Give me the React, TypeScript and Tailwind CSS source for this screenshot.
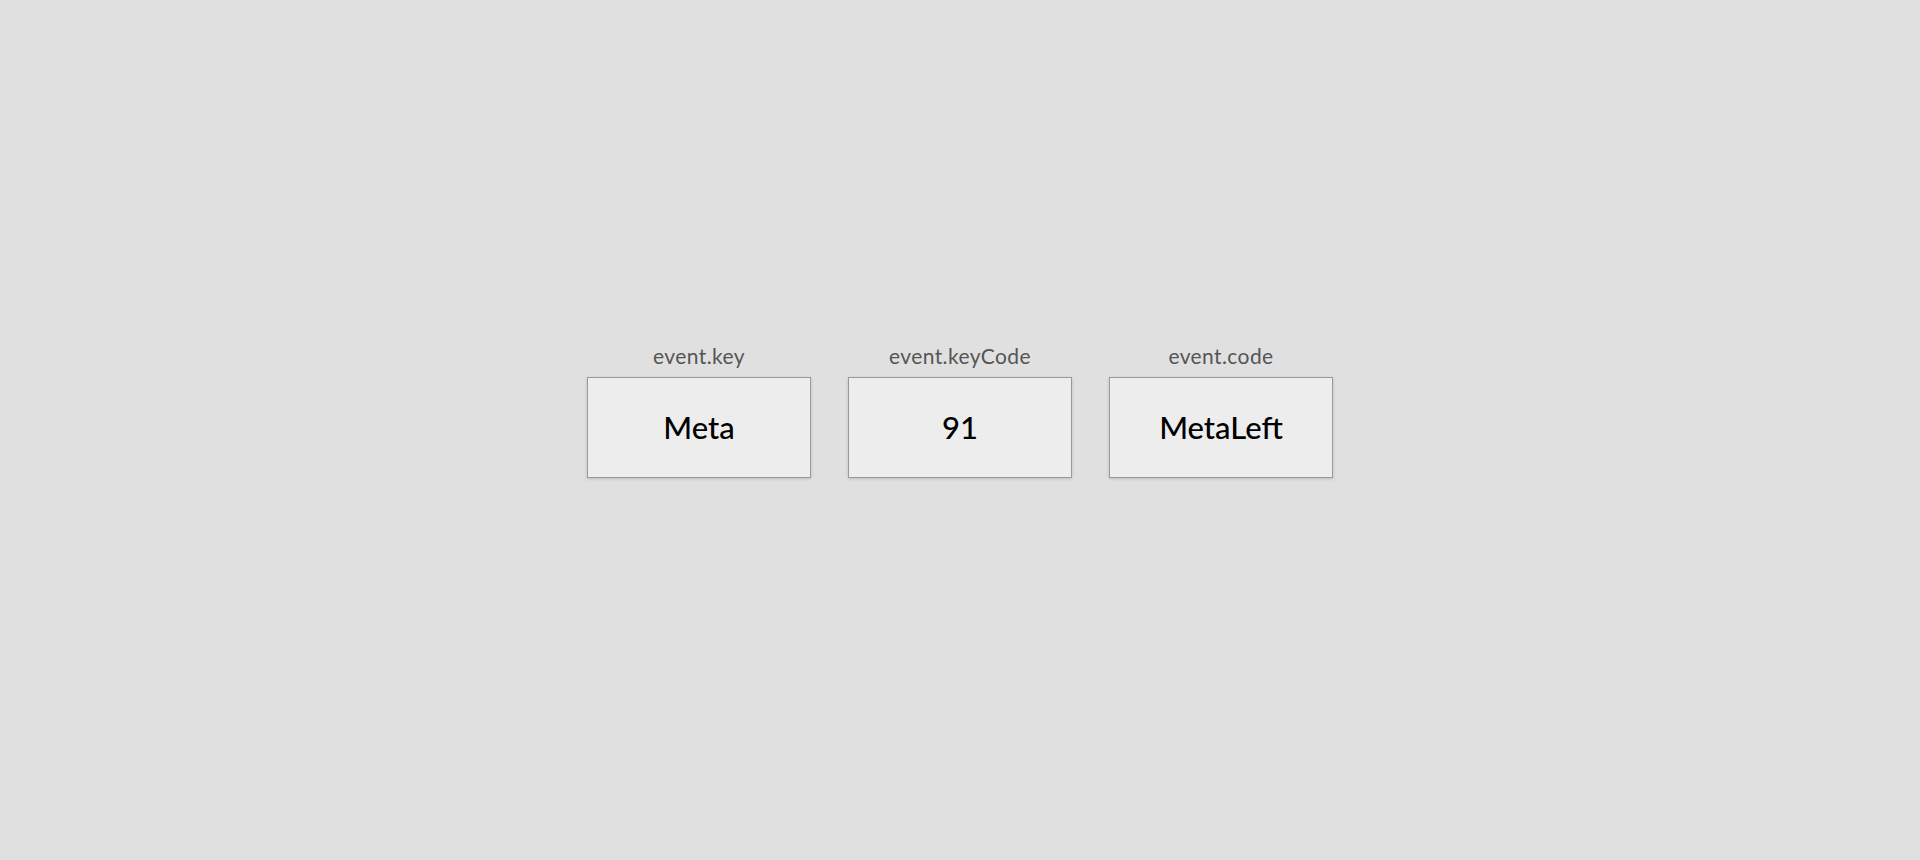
import React from "react";

const items = [
  { label: "event.key", value: "Meta" },
  { label: "event.keyCode", value: "91" },
  { label: "event.code", value: "MetaLeft" },
];

export default function App() {
  return (
    <div
      className="w-full h-[860px] bg-[#e0e0e0] flex justify-center pt-[344px]"
      style={{ fontFamily: "Lato, 'Noto Sans', sans-serif" }}
    >
      <div className="flex gap-[37px] items-start">
        {items.map((it) => (
          <div key={it.label} className="flex flex-col items-center">
            <div className="text-[21px] leading-[24px] tracking-[0.4px] text-[#555555] mb-[9px]">{it.label}</div>
            <div className="w-[224px] h-[101px] bg-[#ededed] border border-[#999999] shadow-[0_1px_3px_rgba(0,0,0,0.15)] flex items-center justify-center">
              <span className="text-[31px] text-black font-medium">{it.value}</span>
            </div>
          </div>
        ))}
      </div>
    </div>
  );
}
